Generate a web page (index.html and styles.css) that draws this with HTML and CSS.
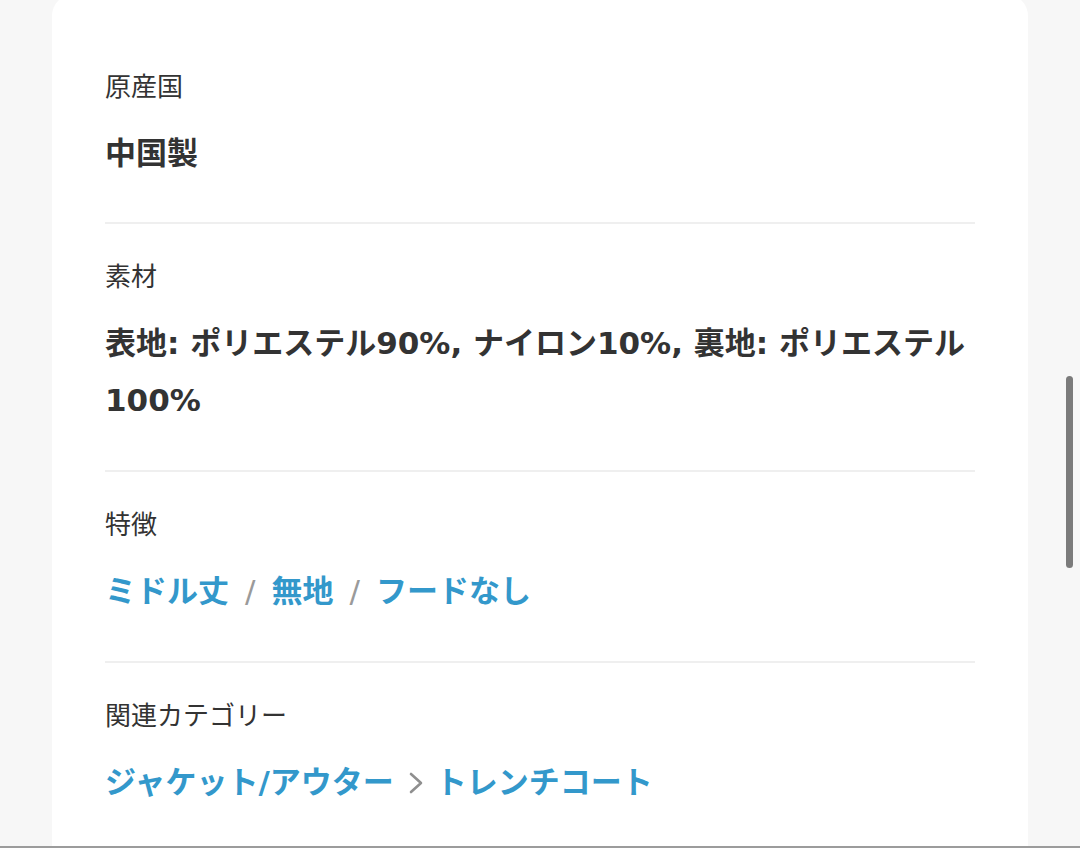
FILE: index.html
```html
<!DOCTYPE html>
<html lang="ja">
<head>
<meta charset="utf-8">
<link rel="stylesheet" href="styles.css">
</head>
<body>
<main class="card">
  <section class="row">
    <div class="label">原産国</div>
    <div class="value">中国製</div>
  </section>
  <section class="row">
    <div class="label">素材</div>
    <div class="value">表地: ポリエステル90%, ナイロン10%, 裏地: ポリエステル100%</div>
  </section>
  <section class="row">
    <div class="label">特徴</div>
    <div class="value links">
      <a class="link">ミドル丈</a><span class="slash">/</span><a class="link">無地</a><span class="slash">/</span><a class="link">フードなし</a>
    </div>
  </section>
  <section class="row last">
    <div class="label">関連カテゴリー</div>
    <div class="value links">
      <a class="link">ジャケット/アウター</a>
      <svg class="chev" width="16" height="24" viewBox="0 0 16 24"><path d="M3 3 L13 12 L3 21" fill="none" stroke="#8f8f8f" stroke-width="2.6" stroke-linecap="round" stroke-linejoin="round"/></svg>
      <a class="link">トレンチコート</a>
    </div>
  </section>
</main>
<div class="scrollbar"></div>
<div class="bottom-edge"></div>
</body>
</html>
```

FILE: styles.css
```css
html, body {
  margin: 0;
  padding: 0;
  height: 100%;
  overflow: hidden;
  background: #f7f7f7;
}
body {
  font-family: "Noto Sans CJK JP", "Noto Sans", sans-serif;
  color: #333;
}
.card {
  margin: -6px 0 0 52px;
  width: 976px;
  box-sizing: border-box;
  background: #fff;
  border-radius: 22px;
  padding: 40px 53px 0 53px;
  min-height: 880px;
}
.row {
  padding: 33px 0 41px;
  border-bottom: 2px solid #efefef;
}
.row:first-child {
  padding-bottom: 40px;
}
.row.last {
  border-bottom: none;
}
.label {
  font-size: 26px;
  line-height: 36px;
  color: #333;
}
.value {
  margin-top: 22px;
  font-family: "DejaVu Sans", "Noto Sans CJK JP", sans-serif;
  font-size: 31px;
  line-height: 57px;
  font-weight: 700;
  color: #333;
}
.links {
  display: flex;
  align-items: center;
  flex-wrap: wrap;
}
.link {
  color: #3398cb;
  text-decoration: none;
}
.slash {
  color: #9a9a9a;
  font-weight: 400;
  margin: 0 16px;
}
.chev {
  margin: 0 12px 0 14px;
}
.scrollbar {
  position: fixed;
  left: 1066px;
  top: 376px;
  width: 7px;
  height: 192px;
  border-radius: 4px;
  background: #7b7b7b;
}
.bottom-edge {
  position: fixed;
  left: 0;
  right: 0;
  bottom: 0;
  height: 2px;
  background: #9c9c9c;
}
```
